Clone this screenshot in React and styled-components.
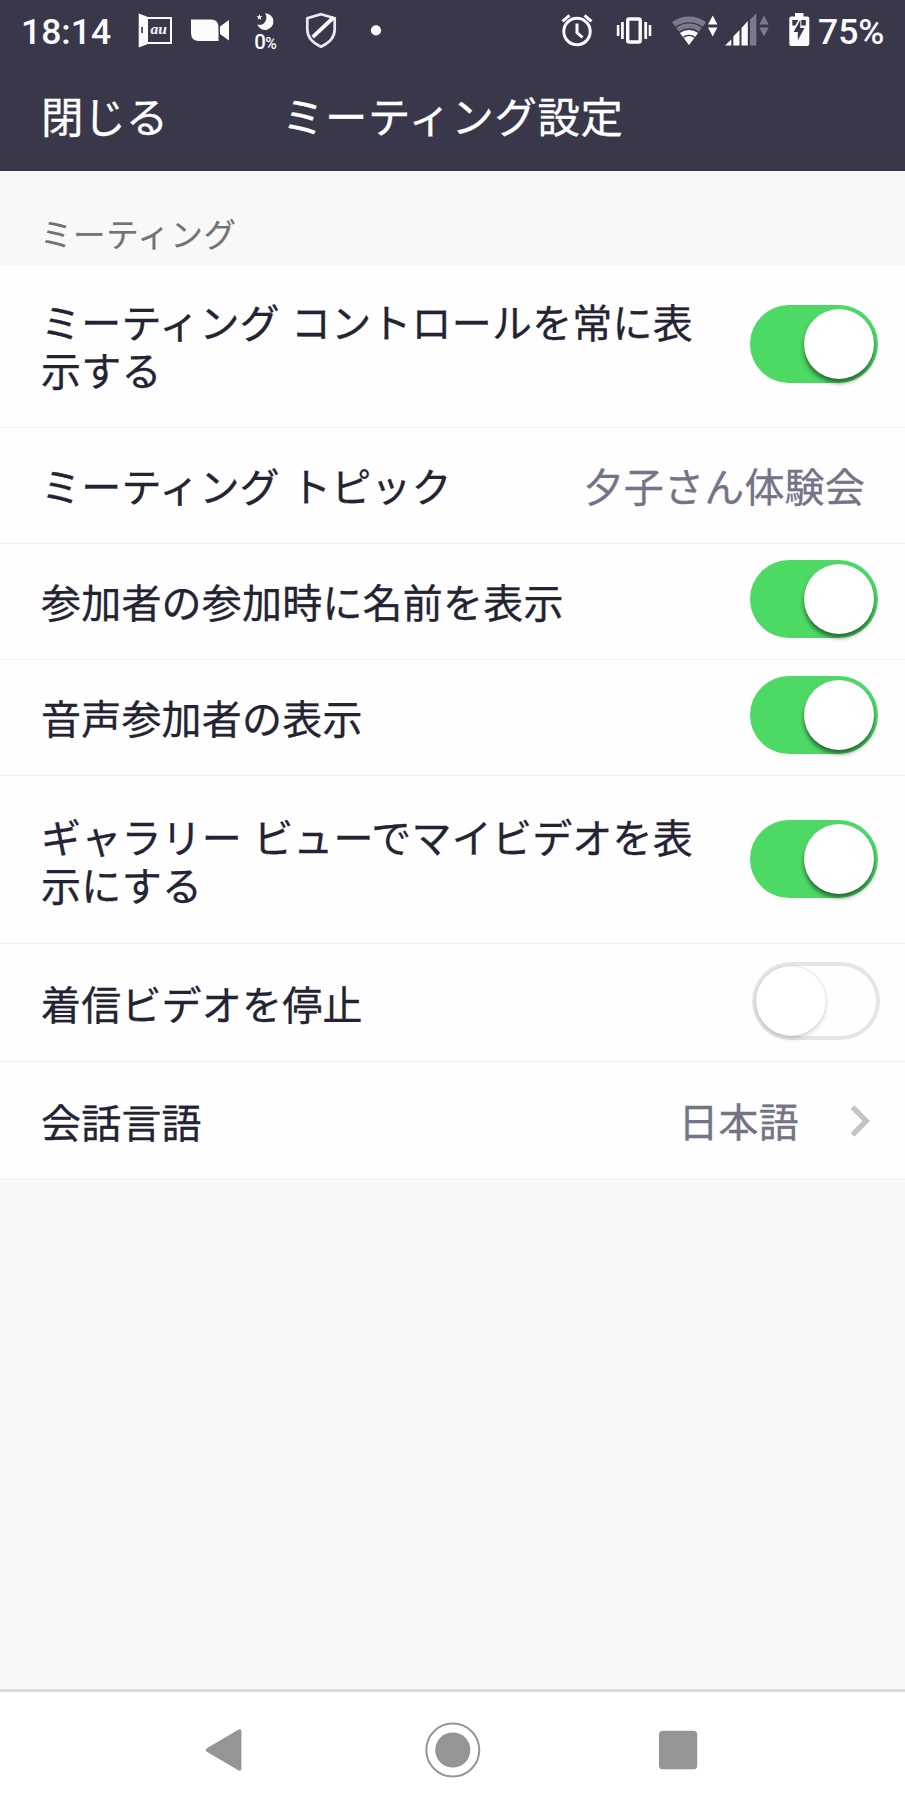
import React, { useState } from "react";
import styled, { createGlobalStyle, css } from "styled-components";

const GlobalStyle = createGlobalStyle`
  * { box-sizing: border-box; }
  body {
    margin: 0;
    background: #f8f8f8;
    font-family: "Noto Sans CJK JP", "Noto Sans", sans-serif;
  }
`;

const Screen = styled.div`
  display: flex;
  flex-direction: column;
  width: 905px;
  height: 1810px;
  overflow: hidden;
  background: #f8f8f8;
`;

const Header = styled.header`
  height: 171px;
  flex: none;
  background: #39384b;
  color: #fff;
`;

const StatusBar = styled.div`
  display: flex;
  align-items: center;
  height: 62px;
  padding: 0 21px 0 21px;
  font-family: Roboto, sans-serif;
  font-size: 35.5px;
  font-weight: 500;
  line-height: 1;
  color: #fbfbfe;
`;

const Clock = styled.span`
  width: 91px;
  padding-top: 3px;
  white-space: nowrap;
`;

const Battery = styled.span`
  width: 66px;
  margin-left: 8px;
  padding-top: 3px;
  white-space: nowrap;
`;

const StatusIcon = styled.svg`
  flex: none;
  display: block;
  width: ${(p) => p.$w}px;
  height: 40px;
  margin-left: ${(p) => p.$gap}px;
  overflow: visible;
  fill: #fbfbfe;
`;

const Spacer = styled.span`
  flex: 1;
`;

const TitleBar = styled.div`
  display: flex;
  align-items: center;
  height: 109px;
  padding: 0 41px 4px;
  font-size: 42.4px;
  line-height: 56px;
  letter-spacing: 0.6px;
  -webkit-text-stroke: 0.3px currentColor;
`;

const CloseButton = styled.button`
  width: 241px;
  padding: 0;
  border: 0;
  background: none;
  color: inherit;
  font: inherit;
  letter-spacing: 0;
  text-align: left;
`;

const Title = styled.h1`
  margin: 0;
  font: inherit;
  white-space: nowrap;
`;

const SectionLabel = styled.h2`
  display: flex;
  align-items: flex-end;
  flex: none;
  height: 94px;
  margin: 0;
  padding: 0 40px 10px;
  font-size: 32.4px;
  font-weight: 400;
  line-height: 44px;
  letter-spacing: 0.7px;
  color: #737373;
  -webkit-text-stroke: 0.2px currentColor;
`;

const Panel = styled.section`
  flex: none;
  padding-bottom: 2px;
  background: #fefefe;
`;

const Row = styled.div`
  display: flex;
  align-items: center;
  justify-content: space-between;
  height: ${(p) => p.$height}px;
  padding: 0 ${(p) => p.$right}px 0 41px;
  border-bottom: 1px solid #efeff1;
  font-size: 40px;
  line-height: 48px;
  letter-spacing: 0.2px;
  word-spacing: 2px;
  color: #232333;
  -webkit-text-stroke: 0.3px currentColor;
`;

const Label = styled.div`
  max-width: 670px;
  padding-bottom: ${(p) => p.$rise ?? 2}px;
`;

const Value = styled.div`
  margin-left: auto;
  padding-bottom: 2px;
  color: #747487;
`;

const Track = styled.button`
  display: flex;
  align-items: center;
  flex: none;
  width: 128px;
  height: 78px;
  padding: 0 4px;
  margin-bottom: ${(p) => p.$lift}px;
  border: 0;
  border-radius: 39px;
  justify-content: flex-end;
  background: #4cd964;
  ${(p) =>
    !p.$on &&
    css`
      justify-content: flex-start;
      background: #fefefe;
      box-shadow: inset 0 0 0 4px #e5e5e5;
    `}
`;

const Knob = styled.span`
  width: 70px;
  height: 70px;
  border-radius: 50%;
  background: #fff;
  box-shadow: ${(p) =>
    p.$on
      ? "0 4px 4px rgba(0, 0, 0, 0.5)"
      : "0 0 1px 0.5px rgba(0, 0, 0, 0.14), 0 3px 4px rgba(0, 0, 0, 0.13)"};
`;

const Chevron = styled.svg`
  flex: none;
  width: 20px;
  height: 32px;
  margin-left: 51px;
`;

const NavBar = styled.nav`
  display: flex;
  align-items: center;
  flex: none;
  height: 121px;
  margin-top: auto;
  padding: 0 207px 3px 205px;
  border-top: 3px solid #dcdcdc;
  background: #fff;
`;

const NavIcon = styled.svg`
  width: ${(p) => p.$size}px;
  height: 58px;
  margin-left: ${(p) => p.$gap}px;
  fill: #959595;
`;

function Toggle({ initial, lift = 0 }) {
  const [on, setOn] = useState(initial);
  return (
    <Track type="button" role="switch" aria-checked={on} $on={on} $lift={lift} onClick={() => setOn(!on)}>
      <Knob $on={on} />
    </Track>
  );
}

function StatusIcons() {
  return (
    <StatusBar>
      <Clock>18:14</Clock>
      <StatusIcon $w={34} $gap={26} viewBox="0 0 34 40">
        <path fillRule="evenodd" d="M.7 2.5 10 6v27L.7 36.5zM3.2 16v6h1.7v-6z" />
        <path d="M10 7h23v25H10" fill="none" stroke="#fbfbfe" strokeWidth="2" />
        <text x="12.5" y="23" fontFamily="Liberation Serif, serif" fontStyle="italic" fontWeight="700" fontSize="14.5" textLength="16.5" lengthAdjust="spacingAndGlyphs">au</text>
      </StatusIcon>
      <StatusIcon $w={40} $gap={18} viewBox="0 0 40 40">
        <path d="M1 8.5h20q7.5 0 7.5 8V30H9q-8 0-8-8zM39 9v20.5L30 23v-7.5z" />
      </StatusIcon>
      <StatusIcon $w={24} $gap={24} viewBox="0 0 24 40">
        <path d="M11 2.3A8.3 8.3 0 1 1 3.3 13.5 7.2 7.2 0 0 0 11 2.3zM5.5 3l.8 2.2 2.2.1-1.8 1.4.7 2.2-1.9-1.3-1.9 1.3.7-2.2-1.8-1.4 2.3-.1z" />
        <text x=".2" y="38" fontSize="20.5" fontWeight="500">0</text>
        <text x="11.3" y="38" fontSize="16.5" fontWeight="500" textLength="11.5" lengthAdjust="spacingAndGlyphs">%</text>
      </StatusIcon>
      <StatusIcon $w={32} $gap={27} viewBox="0 0 32 40">
        <path d="M16 3.2 29.7 7.3v11.2c0 9-6.7 14-13.7 17.2C9 32.5 2.3 27.5 2.3 18.5V7.3z" fill="none" stroke="#e9e9f6" strokeWidth="2.7" />
        <path d="M7.7 26.1 28.5 6.5" stroke="#fbfbfe" strokeWidth="3.8" />
      </StatusIcon>
      <StatusIcon $w={10} $gap={34} viewBox="0 0 10 40">
        <circle cx="5" cy="19.3" r="5.1" />
      </StatusIcon>
      <Spacer />
      <StatusIcon $w={32} $gap={0} viewBox="0 0 32 40">
        <g fill="none" stroke="#fbfbfe">
          <circle cx="16" cy="20.5" r="13.2" strokeWidth="3" />
          <path d="M16 12.5v9l5.5 5" strokeWidth="3" />
          <path d="m1.5 10.3 7-6M30.5 10.3l-7-6" strokeWidth="3" />
        </g>
      </StatusIcon>
      <StatusIcon $w={36} $gap={23} viewBox="0 0 36 40">
        <rect x="11.7" y="8" width="12.5" height="23" rx="1.5" fill="none" stroke="#fbfbfe" strokeWidth="3.4" />
        <path d="M.8 14h2.6v11H.8zM5 11h2.8v17H5zM28.3 11h2.8v17h-2.8zM32.7 14h2.6v11h-2.6z" />
      </StatusIcon>
      <StatusIcon $w={46} $gap={20} viewBox="0 0 46 40">
        <path d="M0 11.2A28.5 28.5 0 0 1 34 11.2L17 34z" opacity=".34" />
        <path d="M8 22A15 15 0 0 1 26 22L17 34z" />
        <g fill="none" stroke="#39384b" strokeWidth="1.4">
          <path d="M3.7 16.4A22 22 0 0 1 30.3 16.4M7.4 21.2A16 16 0 0 1 26.6 21.2M11.3 26.4A9.5 9.5 0 0 1 22.7 26.4" />
        </g>
        <path d="m40.7 4.5 4.7 9H36zM36 16.5h9.4l-4.7 9z" />
      </StatusIcon>
      <StatusIcon $w={45} $gap={7.5} viewBox="0 0 45 40">
        <path d="M0 34.5 6.3 28.5v6zM8.3 25.5l6.2-6.5v15.5H8.3zM16.5 17l6.3-7v24.5h-6.3z" />
        <g opacity=".34">
          <path d="M25 8.5 31.3 2.5v32H25zM39 4.5l4.7 9h-9.4zM34.3 16.5h9.4l-4.7 9z" />
        </g>
      </StatusIcon>
      <StatusIcon $w={21} $gap={19} viewBox="0 0 21 40">
        <path fillRule="evenodd" d="M6 2h8.5v3.5h4Q20.300 5.5 20.3 7.3v25.6q0 2-2 2H2.3q-2 0-2-2V7.3q0-1.8 2-1.8H6zM3.3 9v5.5h3L9.3 9zM12.3 9v5.5h4.5V9z" />
        <path d="M11.3 9 4.6 21h4.2v8.3L15.5 17h-4.2z" fill="#39384b" />
      </StatusIcon>
      <Battery>75%</Battery>
    </StatusBar>
  );
}

export default function App() {
  return (
    <>
      <GlobalStyle />
      <Screen>
        <Header>
          <StatusIcons />
          <TitleBar>
            <CloseButton type="button">閉じる</CloseButton>
            <Title>ミーティング設定</Title>
          </TitleBar>
        </Header>

        <SectionLabel>ミーティング</SectionLabel>
        <Panel>
          <Row $height={163} $right={27}>
            <Label>ミーティング コントロールを常に表示する</Label>
            <Toggle initial lift={5} />
          </Row>
          <Row $height={116} $right={40}>
            <Label>ミーティング トピック</Label>
            <Value>夕子さん体験会</Value>
          </Row>
          <Row $height={116} $right={27}>
            <Label>参加者の参加時に名前を表示</Label>
            <Toggle initial lift={5} />
          </Row>
          <Row $height={116} $right={27}>
            <Label>音声参加者の表示</Label>
            <Toggle initial lift={6} />
          </Row>
          <Row $height={168} $right={27}>
            <Label $rise={0}>ギャラリー ビューでマイビデオを表示にする</Label>
            <Toggle initial lift={1} />
          </Row>
          <Row $height={118} $right={25}>
            <Label $rise={0}>着信ビデオを停止</Label>
            <Toggle initial={false} lift={4} />
          </Row>
          <Row $height={118} $right={35}>
            <Label $rise={0}>会話言語</Label>
            <Value>日本語</Value>
            <Chevron viewBox="0 0 20 32">
              <path d="M2.5 2.2 16.3 16 2.5 29.8" fill="none" stroke="#c4c4c4" strokeWidth="5.4" />
            </Chevron>
          </Row>
        </Panel>

        <NavBar>
          <NavIcon $size={37} $gap={0} viewBox="0 0 37 58">
            <path d="M1.8 27.2 33.5 8.5q3.2-1.2 3.2 1.8v37.4q0 3-3.2 1.8L1.8 30.8q-2-1.8 0-3.6z" />
          </NavIcon>
          <NavIcon $size={58} $gap={182} viewBox="0 0 58 58">
            <circle cx="29" cy="29" r="26.7" fill="none" stroke="#959595" strokeWidth="2" />
            <circle cx="29" cy="29" r="17.7" />
          </NavIcon>
          <NavIcon $size={39} $gap={178} viewBox="0 0 39 58">
            <rect y="9.5" width="38.5" height="39" rx="4" />
          </NavIcon>
        </NavBar>
      </Screen>
    </>
  );
}
